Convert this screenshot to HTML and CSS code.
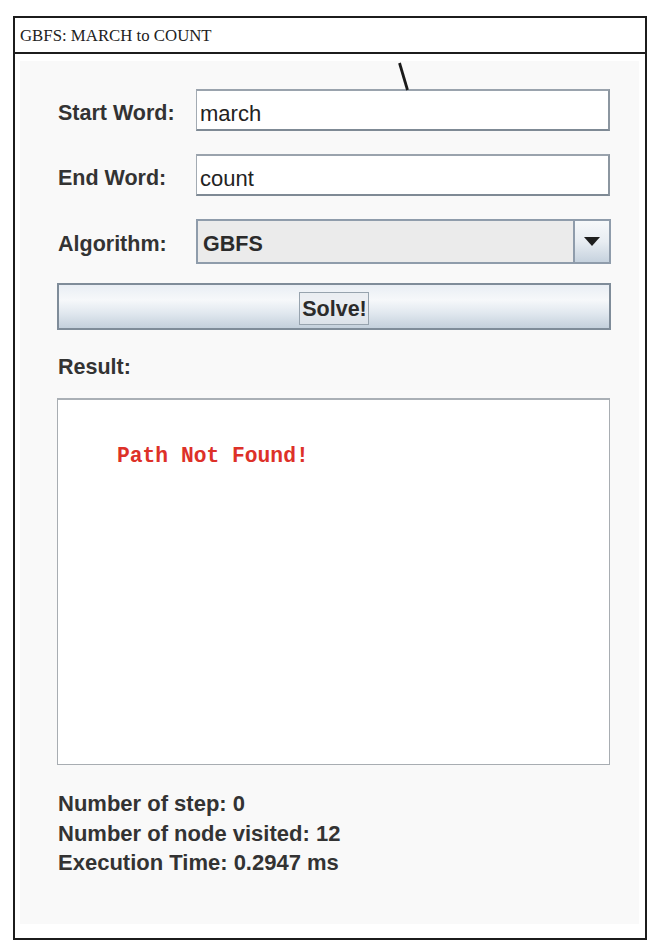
FILE: index.html
```html
<!DOCTYPE html>
<html>
<head>
<meta charset="utf-8">
<link rel="stylesheet" href="styles.css">
</head>
<body>
<div class="frame">
  <div class="titlebar">GBFS: MARCH to COUNT</div>
  <div class="panel">
    <div class="form">
      <label class="lbl">Start Word:</label>
      <div class="field">march</div>
      <label class="lbl">End Word:</label>
      <div class="field">count</div>
      <label class="lbl">Algorithm:</label>
      <div class="combo">
        <span class="combo-val">GBFS</span>
        <span class="combo-btn"><svg width="16" height="9" viewBox="0 0 16 9"><polygon points="0,0 16,0 8,9" fill="#1e1e1e"/></svg></span>
      </div>
    </div>
    <div class="solve"><span class="solve-focus">Solve!</span></div>
    <div class="result-lbl">Result:</div>
    <div class="result-box"><span class="err">Path Not Found!</span></div>
    <div class="stats">
      <div>Number of step: 0</div>
      <div>Number of node visited: 12</div>
      <div>Execution Time: 0.2947 ms</div>
    </div>
  </div>
</div>
<svg class="mark" width="14" height="32" viewBox="0 0 14 32"><line x1="2.5" y1="2" x2="10.5" y2="29" stroke="#1a1a1a" stroke-width="2.8"/></svg>
</body>
</html>
```
FILE: styles.css
```css
html, body {
  margin: 0;
  padding: 0;
  background: #ffffff;
}
body {
  position: relative;
  width: 660px;
  height: 951px;
  overflow: hidden;
}
.frame {
  box-sizing: border-box;
  margin: 16px 0 0 13px;
  width: 634px;
  height: 924px;
  border: 2px solid #1c1c1c;
  display: flex;
  flex-direction: column;
}
.titlebar {
  box-sizing: border-box;
  height: 36px;
  border-bottom: 2px solid #1c1c1c;
  font-family: "Liberation Serif", "Times New Roman", serif;
  font-size: 16.8px;
  color: #222;
  padding: 8px 0 0 5px;
}
.panel {
  flex: 1;
  margin: 7px 6px 14px 5px;
  background: #f9f9f9;
  padding: 28px 28px 0 37px;
  font-family: "Liberation Sans", Arial, sans-serif;
  color: #333;
}
.form {
  display: grid;
  grid-template-columns: 139px 1fr;
  grid-template-rows: 42px 42px 45px;
  row-gap: 23px;
  align-items: center;
}
.form .combo { margin-top: -1px; }
.lbl {
  font-weight: bold;
  font-size: 21.5px;
  color: #333;
  padding: 6px 0 0 1px;
}
.field {
  box-sizing: border-box;
  height: 42px;
  background: #fff;
  border: 1px solid #a3abb3;
  border-top: 2px solid #9aa3ad;
  border-right: 2px solid #8c96a0;
  border-bottom: 2px solid #7f8a95;
  font-size: 22px;
  color: #222;
  padding: 10px 0 0 3px;
  margin-right: 1px;
}
.combo {
  box-sizing: border-box;
  height: 45px;
  display: flex;
  border: 2px solid #8f9cab;
  background: #ebebeb;
}
.combo-val {
  flex: 1;
  font-weight: bold;
  font-size: 21.5px;
  color: #2b2b2b;
  padding: 11px 0 0 5px;
}
.combo-btn {
  width: 34px;
  border-left: 2px solid #8f9cab;
  background: linear-gradient(#f6f8fa, #e8edf2 50%, #c6d2de);
  display: flex;
  align-items: center;
  justify-content: center;
}
.solve {
  box-sizing: border-box;
  margin-top: 19px;
  height: 47px;
  border: 2px solid #7f8c99;
  background: linear-gradient(#e9eef4, #f6f8fa 35%, #e1e8ef 65%, #c4d0dc);
  display: flex;
  align-items: center;
  justify-content: center;
}
.solve-focus {
  margin-top: 4px;
  border: 1px solid #97a3ae;
  background: rgba(230, 234, 238, 0.6);
  font-weight: bold;
  font-size: 21.5px;
  color: #2b2b2b;
  padding: 5px 1px 4px 2px;
  line-height: 22px;
}
.result-lbl {
  margin-top: 25px;
  font-weight: bold;
  font-size: 21.5px;
  line-height: 24px;
  color: #333;
  padding-left: 1px;
}
.result-box {
  box-sizing: border-box;
  margin-top: 19px;
  height: 367px;
  margin-right: 1px;
  background: #fff;
  border: 1px solid #a8adb2;
  border-top: 2px solid #aab0b6;
  padding: 44px 0 0 59px;
}
.err {
  font-family: "Liberation Mono", "Courier New", monospace;
  font-weight: bold;
  font-size: 21.3px;
  color: #dd3128;
  line-height: 24px;
}
.stats {
  margin-top: 24px;
  font-weight: bold;
  font-size: 22px;
  line-height: 29.5px;
  color: #333;
  padding-left: 1px;
}
.mark {
  position: absolute;
  left: 397px;
  top: 61px;
}
```
